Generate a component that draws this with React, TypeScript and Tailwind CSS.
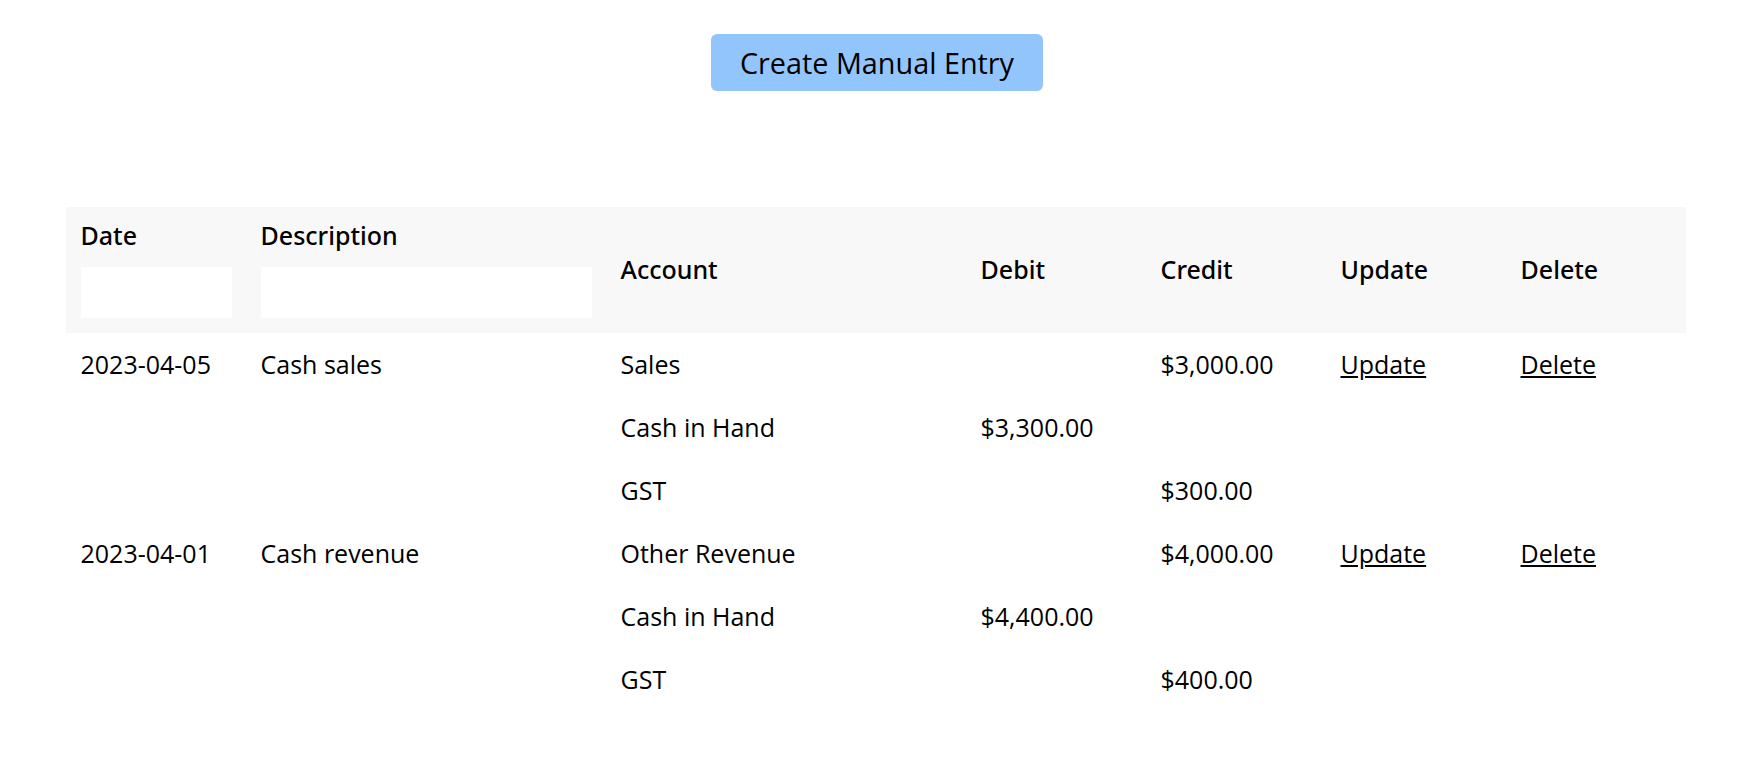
import React from "react";

type Line = { account: string; debit?: string; credit?: string };
type Entry = { date: string; description: string; lines: Line[] };

const entries: Entry[] = [
  {
    date: "2023-04-05",
    description: "Cash sales",
    lines: [
      { account: "Sales", credit: "$3,000.00" },
      { account: "Cash in Hand", debit: "$3,300.00" },
      { account: "GST", credit: "$300.00" },
    ],
  },
  {
    date: "2023-04-01",
    description: "Cash revenue",
    lines: [
      { account: "Other Revenue", credit: "$4,000.00" },
      { account: "Cash in Hand", debit: "$4,400.00" },
      { account: "GST", credit: "$400.00" },
    ],
  },
];

const td = "h-[63px] px-[14.5px] p-0 align-middle leading-[63px] whitespace-nowrap";
const th = "px-[14.5px] text-left font-medium font-['Noto_Sans','Open_Sans',sans-serif]";

export default function App() {
  return (
    <div className="min-h-screen bg-white text-black font-['Open_Sans','Noto_Sans',sans-serif] text-[25px]">
      <div className="flex justify-center pt-[34px]">
        <button className="h-[57px] px-[29px] rounded-[6px] bg-[#93c5fd] text-[28.8px] leading-[39px] text-black">
          Create Manual Entry
        </button>
      </div>
      <div className="mt-[116px] pl-[66px]">
        <table className="w-[1620px] table-fixed border-collapse">
          <colgroup>
            <col className="w-[180px]" />
            <col className="w-[360px]" />
            <col className="w-[360px]" />
            <col className="w-[180px]" />
            <col className="w-[180px]" />
            <col className="w-[180px]" />
            <col className="w-[180px]" />
          </colgroup>
          <thead>
            <tr className="bg-[#f8f8f8]">
              <th className={`${th} pt-[9px] pb-[15px] align-top`}>
                <div className="h-[38px] leading-[38px]">Date</div>
                <input className="mt-[12.5px] block h-[51px] w-full bg-white outline-none" />
              </th>
              <th className={`${th} pt-[9px] pb-[15px] align-top`}>
                <div className="h-[38px] leading-[38px]">Description</div>
                <input className="mt-[12.5px] block h-[51px] w-full bg-white outline-none" />
              </th>
              <th className={`${th} align-middle`}>Account</th>
              <th className={`${th} align-middle`}>Debit</th>
              <th className={`${th} align-middle`}>Credit</th>
              <th className={`${th} align-middle`}>Update</th>
              <th className={`${th} align-middle`}>Delete</th>
            </tr>
          </thead>
          <tbody>
            {entries.map((e) =>
              e.lines.map((l, i) => (
                <tr key={e.date + i}>
                  <td className={td}>{i === 0 ? e.date : ""}</td>
                  <td className={td}>{i === 0 ? e.description : ""}</td>
                  <td className={td}>{l.account}</td>
                  <td className={td}>{l.debit ?? ""}</td>
                  <td className={td}>{l.credit ?? ""}</td>
                  <td className={td}>
                    {i === 0 ? <a href="#" className="underline text-black">Update</a> : ""}
                  </td>
                  <td className={td}>
                    {i === 0 ? <a href="#" className="underline text-black">Delete</a> : ""}
                  </td>
                </tr>
              ))
            )}
          </tbody>
        </table>
      </div>
    </div>
  );
}
